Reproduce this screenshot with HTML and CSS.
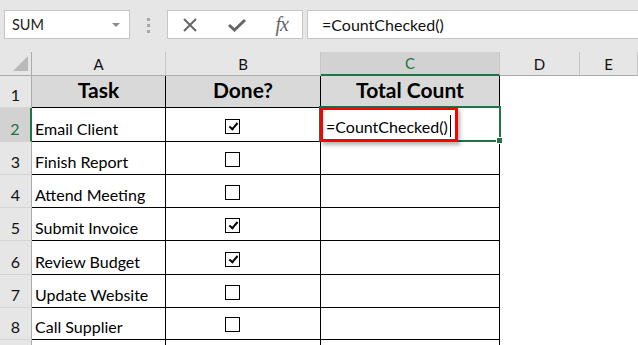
FILE: index.html
```html
<!DOCTYPE html>
<html lang="en">
<head>
    <meta charset="UTF-8">
    <title>Count Checked</title>
    <link rel="stylesheet" href="styles.css">
</head>
<body>
    <div class="formula-bar">
        <div class="name-box">
            <span>SUM</span>
            <span class="drop"></span>
        </div>
        <div class="grip"><i></i><i></i><i></i></div>
        <div class="fx-box">
            <svg width="16" height="14" viewBox="0 0 16 14"><path d="M2 1 L14 13 M14 1 L2 13" stroke="#666" stroke-width="2" fill="none"/></svg>
            <svg width="18" height="14" viewBox="0 0 18 14"><path d="M1 7 L6.5 12 L17 2" stroke="#666" stroke-width="3" fill="none"/></svg>
            <span class="fx">fx</span>
        </div>
        <div class="formula-input">=CountChecked()</div>
    </div>

    <div class="sheet">
        <!-- column headers -->
        <div class="corner"><span class="tri"></span></div>
        <div class="col-head">A</div>
        <div class="col-head">B</div>
        <div class="col-head selected">C</div>
        <div class="col-head">D</div>
        <div class="col-head">E</div>

        <!-- row 1 -->
        <div class="row-head">1</div>
        <div class="cell title">Task</div>
        <div class="cell title">Done?</div>
        <div class="cell title">Total Count</div>
        <div class="blank"></div>
        <div class="blank"></div>

        <!-- row 2 -->
        <div class="row-head selected">2</div>
        <div class="cell">Email Client</div>
        <div class="cell check"><span class="box on"></span></div>
        <div class="cell active">
            <span class="outline"><i class="handle"></i></span>
            <span class="editing">=CountChecked()<b class="cursor"></b></span>
        </div>
        <div class="blank"></div>
        <div class="blank"></div>

        <div class="row-head">3</div>
        <div class="cell">Finish Report</div>
        <div class="cell check"><span class="box"></span></div>
        <div class="cell"></div>
        <div class="blank"></div>
        <div class="blank"></div>

        <div class="row-head">4</div>
        <div class="cell">Attend Meeting</div>
        <div class="cell check"><span class="box"></span></div>
        <div class="cell"></div>
        <div class="blank"></div>
        <div class="blank"></div>

        <div class="row-head">5</div>
        <div class="cell">Submit Invoice</div>
        <div class="cell check"><span class="box on"></span></div>
        <div class="cell"></div>
        <div class="blank"></div>
        <div class="blank"></div>

        <div class="row-head">6</div>
        <div class="cell">Review Budget</div>
        <div class="cell check"><span class="box on"></span></div>
        <div class="cell"></div>
        <div class="blank"></div>
        <div class="blank"></div>

        <div class="row-head">7</div>
        <div class="cell">Update Website</div>
        <div class="cell check"><span class="box"></span></div>
        <div class="cell"></div>
        <div class="blank"></div>
        <div class="blank"></div>

        <div class="row-head">8</div>
        <div class="cell">Call Supplier</div>
        <div class="cell check"><span class="box"></span></div>
        <div class="cell"></div>
        <div class="blank"></div>
        <div class="blank"></div>

        <!-- row 9, only its top edge is in view -->
        <div class="row-head"></div>
        <div class="cell"></div>
        <div class="cell"></div>
        <div class="cell"></div>
        <div class="blank"></div>
        <div class="blank"></div>
    </div>
</body>
</html>
```
FILE: styles.css
```css
body {
    margin: 0;
    width: 638px;
    height: 345px;
    overflow: hidden;
    font-family: Lato, "Liberation Sans", sans-serif;
    background: #fff;
}
.formula-bar {
    display: flex;
    align-items: flex-start;
    height: 52px;
    padding-top: 10px;
    box-sizing: border-box;
    background: #e6e6e6;
}
.name-box {
    display: flex;
    align-items: center;
    justify-content: space-between;
    width: 126px;
    height: 29px;
    margin-left: 4px;
    padding: 0 9px 0 7px;
    box-sizing: border-box;
    background: #fff;
    border: 1px solid #c6c6c6;
    font-size: 14.5px;
    color: #222;
}
.drop {
    width: 0;
    height: 0;
    border-left: 4px solid transparent;
    border-right: 4px solid transparent;
    border-top: 4px solid #8a8a8a;
}
.grip {
    display: flex;
    flex-direction: column;
    gap: 3px;
    margin: 8px 17px 0 17px;
}
.grip i {
    width: 3px;
    height: 3px;
    background: #a8a8a8;
}
.fx-box {
    display: flex;
    align-items: center;
    justify-content: space-between;
    width: 136px;
    height: 29px;
    padding: 0 14px 0 14px;
    box-sizing: border-box;
    background: #fff;
    border: 1px solid #c6c6c6;
}
.fx {
    font-family: "Liberation Serif", serif;
    font-style: italic;
    font-size: 20px;
    letter-spacing: -1px;
    color: #666;
}
.formula-input {
    flex: 1;
    height: 29px;
    margin-left: 4px;
    padding-left: 14px;
    box-sizing: border-box;
    background: #fff;
    border: 1px solid #c6c6c6;
    border-right: none;
    font-size: 16px;
    line-height: 27px;
    color: #111;
}
.sheet {
    display: grid;
    grid-template-columns: 32px 134px 155px 179px 80px 58px;
    grid-template-rows: 24px 32px 34px 33px 33px 33px 34px 33px 32px 20px;
}
.corner {
    position: relative;
    background: #e6e6e6;
    border-right: 1px solid #ababab;
    border-bottom: 1px solid #ababab;
}
.corner .tri {
    position: absolute;
    right: 3px;
    bottom: 4px;
    width: 0;
    height: 0;
    border-left: 15px solid transparent;
    border-bottom: 15px solid #b9b9b9;
}
.col-head {
    display: flex;
    align-items: center;
    justify-content: center;
    background: #e6e6e6;
    border-right: 1px solid #c6c6c6;
    border-bottom: 1px solid #ababab;
    font-size: 15px;
    color: #111;
}
.col-head.selected {
    background: #d2d2d2;
    color: #217346;
    border-bottom: 2px solid #217346;
}
.row-head {
    display: flex;
    align-items: flex-end;
    justify-content: center;
    padding-bottom: 3px;
    box-sizing: border-box;
    background: #e6e6e6;
    border-right: 1px solid #ababab;
    border-bottom: 1px solid #d4d4d4;
    font-size: 16px;
    color: #111;
}
.row-head.selected {
    background: #d2d2d2;
    color: #217346;
    border-right: 2px solid #217346;
}
.cell {
    display: flex;
    align-items: flex-end;
    padding: 0 0 3px 3px;
    box-sizing: border-box;
    border-right: 1px solid #000;
    border-bottom: 1px solid #000;
    font-size: 16px;
    color: #000;
    white-space: nowrap;
}
.cell.title {
    justify-content: center;
    padding: 0 0 5px 0;
    background: #d9d9d9;
    font-size: 21px;
    font-weight: bold;
}
.cell.check {
    padding: 0 0 7px 59px;
}
.box {
    position: relative;
    width: 15px;
    height: 15px;
    box-sizing: border-box;
    border: 1px solid #000;
    background: #fff;
}
.box.on::after {
    content: "";
    position: absolute;
    left: 5px;
    top: 1px;
    width: 3px;
    height: 7px;
    border-right: 2px solid #000;
    border-bottom: 2px solid #000;
    transform: rotate(40deg);
}
.cell.active {
    position: relative;
    padding-left: 4px;
}
.outline {
    position: absolute;
    left: -2px;
    top: -2px;
    right: -2px;
    bottom: -1px;
    border: 2px solid #217346;
}
.handle {
    position: absolute;
    right: -4px;
    bottom: -4px;
    width: 5px;
    height: 5px;
    background: #217346;
    border: 1px solid #fff;
}
.editing {
    position: absolute;
    left: -1px;
    top: -1px;
    width: 138px;
    height: 35px;
    box-sizing: border-box;
    padding: 0 0 3px 3px;
    display: flex;
    align-items: flex-end;
    border: 3px solid #f00;
    background: #fff;
    box-shadow: 2px 3px 4px rgba(0, 0, 0, 0.3);
}
.cursor {
    width: 1px;
    height: 22px;
    margin-left: 2px;
    margin-bottom: -1px;
    background: #000;
}
.blank {
    background: #fff;
}
```
